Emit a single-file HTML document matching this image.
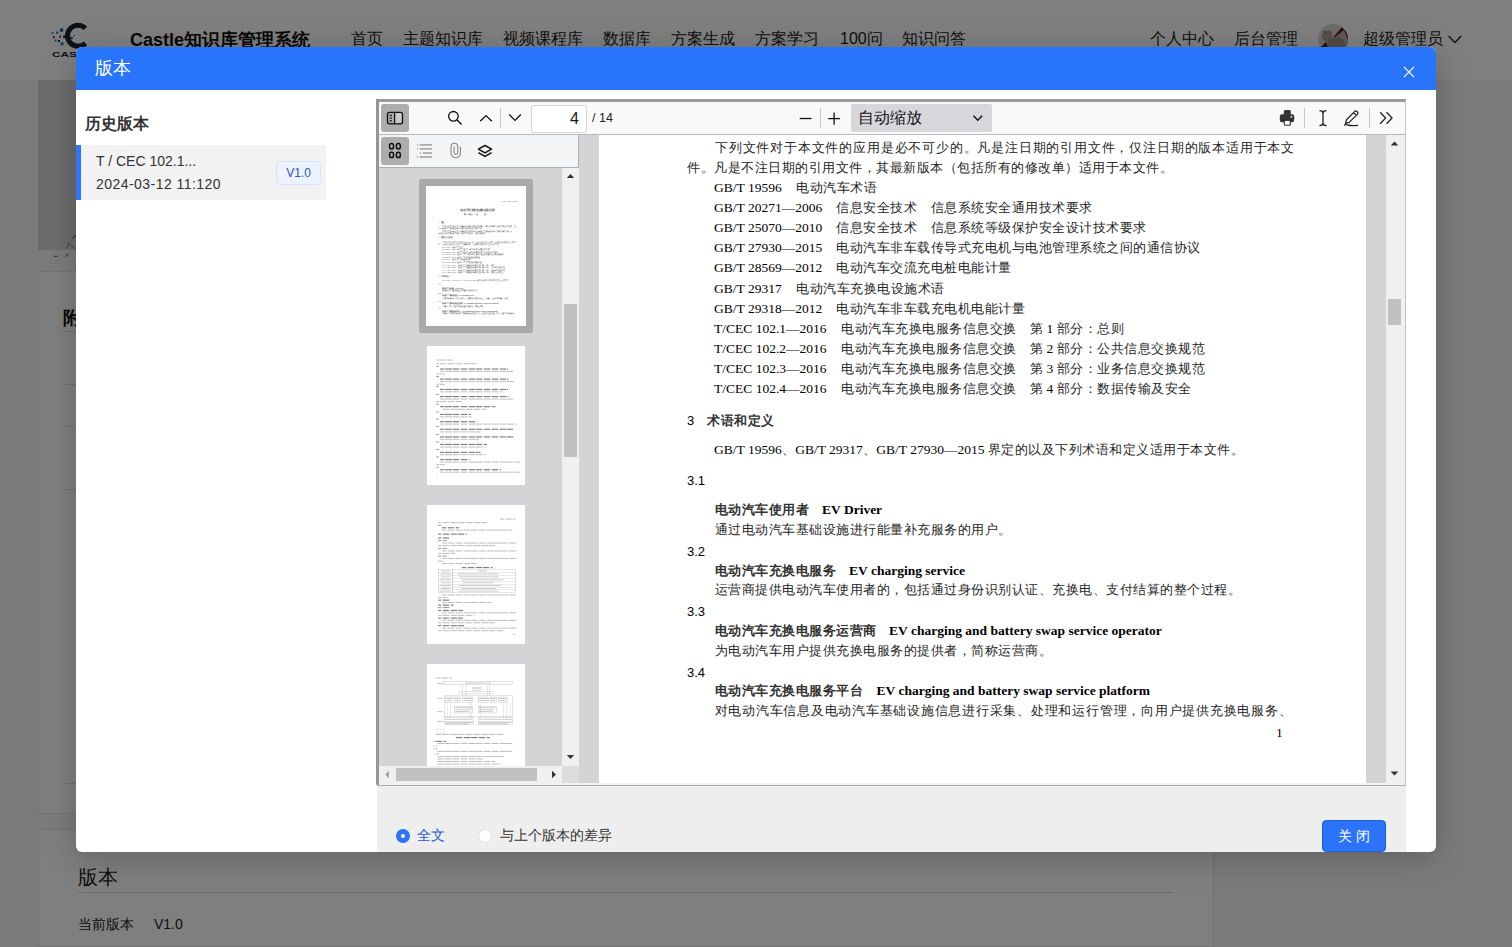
<!DOCTYPE html>
<html><head><meta charset="utf-8">
<style>
*{box-sizing:border-box;margin:0;padding:0}
html,body{width:1512px;height:947px;overflow:hidden;background:#f7f7f7;font-family:"Liberation Sans",sans-serif;color:#333;position:relative}
.a{position:absolute;white-space:nowrap}
#hdr{position:absolute;left:0;top:0;width:1512px;height:80px;background:#fff}
.nav{position:absolute;top:28px;font-size:16px;color:#222;white-space:nowrap;line-height:21px}
#overlay{position:absolute;left:0;top:0;width:1512px;height:947px;background:rgba(0,0,0,.5)}
#modal{position:absolute;left:76px;top:47px;width:1360px;height:805px;background:#fff;border-radius:6px;overflow:hidden;box-shadow:0 6px 32px rgba(0,0,0,.22)}
#mh{position:absolute;left:0;top:0;width:1360px;height:43px;background:#2874fa}
.serif{font-family:"Liberation Serif",serif}
.d{position:absolute;white-space:nowrap;line-height:20px;color:#000}
.d.r{font-family:"Liberation Serif",serif;font-size:13.5px}
.d.b{font-family:"Liberation Serif",serif;font-size:13.5px;font-weight:bold}
.d.h{font-family:"Liberation Sans",sans-serif;font-size:13px}
.d .c{font-size:13px;letter-spacing:0.5px}
.d.r .c{color:#262626}
.d.h .c{font-weight:bold;color:#333}
</style></head><body>
<!-- background page -->
<div id="hdr"></div>
<div class="a" style="left:130px;top:28px;font-size:18px;font-weight:bold;color:#111;line-height:24px">Castle知识库管理系统</div>
<div class="nav" style="left:351px">首页</div>
<div class="nav" style="left:403px">主题知识库</div>
<div class="nav" style="left:503px">视频课程库</div>
<div class="nav" style="left:603px">数据库</div>
<div class="nav" style="left:671px">方案生成</div>
<div class="nav" style="left:755px">方案学习</div>
<div class="nav" style="left:840px">100问</div>
<div class="nav" style="left:902px">知识问答</div>
<div class="nav" style="left:1150px">个人中心</div>
<div class="nav" style="left:1234px">后台管理</div>
<svg class="a" style="left:1318px;top:24px" width="30" height="30" viewBox="0 0 30 30">
 <defs><clipPath id="cav"><circle cx="15" cy="15" r="15"/></clipPath></defs>
 <g clip-path="url(#cav)">
  <rect width="30" height="30" fill="#ddd6cc"/>
  <polygon points="13,16 24,3 34,14 30,30 20,30" fill="#6b1c1c"/>
  <polygon points="16,14 26,6 30,16 30,30 14,30" fill="#bdb3a7"/>
  <polygon points="0,26 8,18 14,30 0,30" fill="#5c1a1a"/>
  <ellipse cx="9" cy="12" rx="5" ry="5.5" fill="#a89f94"/>
  <ellipse cx="18" cy="21" rx="9" ry="8" fill="#a0978b"/>
  <path d="M5 6 L7 10 L10 8z M11 6 L12 10 L14 8z" fill="#8c8377"/>
 </g>
</svg>
<svg class="a" style="left:1446px;top:32px" width="18" height="14" viewBox="0 0 18 14"><polyline points="2.6,4 8.9,10.6 15.3,4" fill="none" stroke="#222" stroke-width="1.4"/></svg>
<svg class="a" style="left:50px;top:20px" width="42" height="32" viewBox="0 0 42 32">
 <path d="M37.2 6.5 A13 13 0 1 0 37.2 24.9 L33.7 21.4 A8 8 0 1 1 33.7 10 Z" fill="#1c2433"/>
 <rect x="10" y="8.5" width="3.2" height="3.2" fill="#1f4f86"/>
 <rect x="6" y="11.5" width="2.3" height="2.3" fill="#3a7aa8"/>
 <rect x="1.6" y="12" width="2" height="2" fill="#4b8ab0"/>
 <rect x="2.8" y="16.3" width="1.8" height="1.8" fill="#1c2433"/>
 <rect x="9" y="15.6" width="2" height="2" fill="#3a5a70"/>
 <rect x="13.2" y="15.4" width="2.8" height="2.8" fill="#1c2433"/>
 <rect x="4.5" y="19.5" width="2" height="2" fill="#3a7aa8"/>
 <rect x="8" y="20" width="2" height="2" fill="#1c2433"/>
 <rect x="10.5" y="22.3" width="3" height="3" fill="#3a7aa8"/>
 <rect x="20.5" y="17" width="2.2" height="2.2" fill="#1f3a66"/>
 <rect x="23.5" y="15" width="1.4" height="1.4" fill="#3a7aa8"/>
</svg>
<svg class="a" style="left:0;top:0" width="120" height="70"><text x="52" y="57" font-family="Liberation Sans" font-size="7.4" font-weight="bold" textLength="47" lengthAdjust="spacingAndGlyphs" fill="#1c2433">CASTLE</text></svg>
<div class="nav" style="left:1363px">超级管理员</div>

<!-- cards -->
<div class="a" style="left:38px;top:80px;width:1175px;height:169px;background:#fff"></div>
<div class="a" style="left:38px;top:80px;width:300px;height:170px;background:#d9d9d9"></div>
<svg class="a" style="left:40px;top:220px" width="40" height="50" viewBox="0 0 40 50"><path d="M26.8 28.5 L28.4 23 L35.5 29.5" stroke="#8a8a8a" stroke-width="1" fill="none"/><path d="M32.6 18.6 L35.4 15.4" stroke="#777" stroke-width="1.5" fill="none"/><path d="M14 36.3 h3.6 M25.6 36.6 L28.6 33.6" stroke="#777" stroke-width="1.2" fill="none"/></svg>
<div class="a" style="left:38px;top:271px;width:1176px;height:543px;background:#fff;border:1px solid #e8e8e8"></div>
<div class="a" style="left:63px;top:306px;font-size:18px;font-weight:bold;color:#111">附件</div>
<div class="a" style="left:63px;top:331px;width:1110px;height:1px;background:#e5e5e5"></div>
<div class="a" style="left:63px;top:384px;width:1110px;height:1px;background:#e5e5e5"></div>
<div class="a" style="left:63px;top:426px;width:1110px;height:1px;background:#e5e5e5"></div>
<div class="a" style="left:63px;top:489px;width:1110px;height:1px;background:#e5e5e5"></div>
<div class="a" style="left:63px;top:783px;width:1110px;height:1px;background:#e5e5e5"></div>
<div class="a" style="left:38px;top:829px;width:1176px;height:118px;background:#fff;border:1px solid #e8e8e8"></div>
<div class="a" style="left:78px;top:864px;font-size:20px;color:#222">版本</div>
<div class="a" style="left:78px;top:892px;width:1096px;height:1px;background:#ddd"></div>
<div class="a" style="left:78px;top:916px;font-size:14px;color:#222">当前版本</div>
<div class="a" style="left:154px;top:916px;font-size:14px;color:#222">V1.0</div>

<div id="overlay"></div>

<div id="modal">
  <div id="mh">
    <div class="a" style="left:19px;top:9px;font-size:18px;color:#fff;line-height:24px">版本</div>
    <svg class="a" style="left:1323px;top:15px" width="20" height="20" viewBox="0 0 20 20"><path d="M4.9 4.9 L15.1 15.1 M15.1 4.9 L4.9 15.1" stroke="#fff" stroke-width="1.2" fill="none"/></svg>
  </div>
  <div class="a" style="left:9px;top:66px;font-size:16px;font-weight:bold;color:#333;line-height:22px">历史版本</div>
  <div class="a" style="left:0;top:98px;width:250px;height:55px;background:#f2f2f2;border-left:5px solid #2b76f9"></div>
  <div class="a" style="left:20px;top:104px;font-size:14px;color:#333;line-height:20px">T / CEC 102.1...</div>
  <div class="a" style="left:20px;top:127px;font-size:14px;color:#333;line-height:20px;letter-spacing:0.45px">2024-03-12 11:120</div>
  <div class="a" style="left:200px;top:114px;width:45px;height:24px;background:#ecf3ff;border:1px solid #d6e5fd;border-radius:4px;font-size:12px;color:#2158c4;text-align:center;line-height:22px">V1.0</div>

</div>
<!-- viewer (page coords) -->
<div class="a" style="left:376px;top:99px;width:1030px;height:687px;background:#d4d4d7;border-top:3px solid #9a9a9a;border-left:3px solid #959595;border-right:1px solid #c4c4c4;border-bottom:1px solid #a8a8a8;border-bottom-left-radius:3px"></div>
<!-- toolbar -->
<div class="a" style="left:379px;top:102px;width:1026px;height:33px;background:#f9f9fa;border-bottom:1px solid #b8b8b8"></div>
<div class="a" style="left:381px;top:104px;width:28px;height:28px;background:#adadad;border-radius:3px"></div>
<svg class="a" style="left:381px;top:104px" width="28" height="28" viewBox="0 0 28 28">
 <rect x="13.6" y="8.5" width="7.6" height="11" fill="#c9c9c9"/>
 <rect x="6.5" y="8.3" width="15" height="11.5" rx="2" fill="none" stroke="#111" stroke-width="1.3"/>
 <line x1="13.6" y1="8.3" x2="13.6" y2="19.8" stroke="#111" stroke-width="1.3"/>
 <line x1="8.6" y1="11.3" x2="11" y2="11.3" stroke="#111" stroke-width="1.1"/>
 <line x1="8.6" y1="14" x2="11" y2="14" stroke="#111" stroke-width="1.1"/>
 <line x1="8.6" y1="16.8" x2="11" y2="16.8" stroke="#111" stroke-width="1.1"/>
</svg>
<svg class="a" style="left:445px;top:108px" width="20" height="20" viewBox="0 0 20 20">
 <circle cx="8.4" cy="8.3" r="4.8" fill="none" stroke="#111" stroke-width="1.3"/>
 <line x1="11.8" y1="11.8" x2="16.6" y2="16.5" stroke="#111" stroke-width="1.4"/>
</svg>
<svg class="a" style="left:476px;top:108px" width="50" height="22" viewBox="0 0 50 22">
 <polyline points="4.2,13.2 10,7.6 15.8,13.2" fill="none" stroke="#111" stroke-width="1.3"/>
 <polyline points="33.2,6.5 39,12.4 44.8,6.5" fill="none" stroke="#111" stroke-width="1.3"/>
</svg>
<div class="a" style="left:500px;top:108px;width:1px;height:20px;background:#c8c8c8"></div>
<div class="a" style="left:531px;top:105px;width:56px;height:28px;background:#fff;border:1px solid #d4d4d4;border-radius:3px"></div>
<div class="a" style="left:531px;top:109px;width:48px;text-align:right;font-size:16px;line-height:20px;color:#151515">4</div>
<div class="a" style="left:592px;top:108px;font-size:12.5px;line-height:20px;color:#222">/ 14</div>
<svg class="a" style="left:795px;top:108px" width="50" height="22" viewBox="0 0 50 22">
 <line x1="4.7" y1="10.5" x2="16.5" y2="10.5" stroke="#111" stroke-width="1.3"/>
 <line x1="33.2" y1="10.6" x2="45" y2="10.6" stroke="#111" stroke-width="1.3"/>
 <line x1="39.1" y1="4.5" x2="39.1" y2="16.7" stroke="#111" stroke-width="1.3"/>
</svg>
<div class="a" style="left:820px;top:108px;width:1px;height:20px;background:#c8c8c8"></div>
<div class="a" style="left:851px;top:104px;width:141px;height:28px;background:#d7d7db;border-radius:2px"></div>
<div class="a" style="left:858px;top:107px;font-size:16px;line-height:22px;color:#111">自动缩放</div>
<svg class="a" style="left:970px;top:112px" width="16" height="12" viewBox="0 0 16 12">
 <polyline points="3.5,3.8 7.8,8.2 12.1,3.8" fill="none" stroke="#111" stroke-width="1.4"/>
</svg>
<svg class="a" style="left:1276px;top:106px" width="22" height="24" viewBox="0 0 22 24">
 <path d="M9.3 3.9 h4 a1.5 1.5 0 0 1 1.5 1.5 v3.4 h-7 v-3.4 a1.5 1.5 0 0 1 1.5 -1.5z" fill="#333"/>
 <rect x="3.8" y="8.3" width="14.4" height="8" rx="2.2" fill="#333"/>
 <rect x="7.8" y="13.6" width="7" height="6.2" rx="1.4" fill="#333"/>
 <rect x="8.9" y="14.8" width="4.8" height="3.9" fill="#f9f9fa"/>
 <rect x="7.8" y="13.6" width="7" height="1.2" fill="#333"/>
 <circle cx="15.3" cy="10.8" r="0.9" fill="#f9f9fa"/>
</svg>
<div class="a" style="left:1304px;top:108px;width:1px;height:20px;background:#c8c8c8"></div>
<svg class="a" style="left:1313px;top:106px" width="20" height="24" viewBox="0 0 20 24">
 <path d="M6.5 4.7 q3.5 0 3.5 2.2 q0 -2.2 3.5 -2.2 M10 6.9 v10.4 M6.5 19.5 q3.5 0 3.5 -2.2 q0 2.2 3.5 2.2" fill="none" stroke="#222" stroke-width="1.3"/>
</svg>
<svg class="a" style="left:1339px;top:106px" width="24" height="24" viewBox="0 0 24 24">
 <path d="M6.5 17.3 l1 -3.6 l8.3 -8.3 a1.5 1.5 0 0 1 2.1 0 l0.6 0.6 a1.5 1.5 0 0 1 0 2.1 l-8.3 8.3z M14.6 6.6 l2.8 2.8" fill="none" stroke="#222" stroke-width="1.3" stroke-linejoin="round"/>
 <path d="M5 19.3 q2 -1.2 4 -0.3 q3 0.8 10 0.4" fill="none" stroke="#222" stroke-width="1.3"/>
</svg>
<div class="a" style="left:1369px;top:108px;width:1px;height:20px;background:#c8c8c8"></div>
<svg class="a" style="left:1376px;top:108px" width="22" height="20" viewBox="0 0 22 20">
 <polyline points="4.2,4.2 9.6,10 4.2,15.8" fill="none" stroke="#222" stroke-width="1.3"/>
 <polyline points="10.6,4.2 16,10 10.6,15.8" fill="none" stroke="#222" stroke-width="1.3"/>
</svg>

<!-- sidebar toolbar -->
<div class="a" style="left:379px;top:135px;width:200px;height:33px;background:#f3f4f5;border-bottom:1px solid #b0b0b0;border-right:1px solid #b0b0b0"></div>
<div class="a" style="left:381px;top:137px;width:28px;height:28px;background:#adadad;border-radius:3px"></div>
<svg class="a" style="left:381px;top:137px" width="28" height="28" viewBox="0 0 28 28">
 <rect x="8.6" y="6.5" width="3.9" height="5.4" rx="1.9" fill="none" stroke="#111" stroke-width="1.5"/>
 <rect x="15.4" y="6.5" width="3.9" height="5.4" rx="1.9" fill="none" stroke="#111" stroke-width="1.5"/>
 <rect x="8.6" y="15.2" width="3.9" height="5.4" rx="1.9" fill="none" stroke="#111" stroke-width="1.5"/>
 <rect x="15.4" y="15.2" width="3.9" height="5.4" rx="1.9" fill="none" stroke="#111" stroke-width="1.5"/>
</svg>
<svg class="a" style="left:414px;top:140px" width="22" height="22" viewBox="0 0 22 22">
 <g stroke="#999" stroke-width="1.4">
 <line x1="3" y1="4.9" x2="4" y2="4.9"/><line x1="5.7" y1="4.9" x2="18" y2="4.9"/>
 <line x1="3" y1="8.9" x2="4" y2="8.9"/><line x1="5.7" y1="8.9" x2="18" y2="8.9"/>
 <line x1="6" y1="13" x2="7" y2="13"/><line x1="8.8" y1="13" x2="18" y2="13"/>
 <line x1="3" y1="17" x2="4" y2="17"/><line x1="5.7" y1="17" x2="18" y2="17"/>
 </g>
</svg>
<svg class="a" style="left:446px;top:140px" width="20" height="22" viewBox="0 0 20 22">
 <path d="M14.5 6.7 V13 A4.75 4.75 0 0 1 5 13 V6.6 A3.4 3.4 0 0 1 11.8 6.6 V12.5 A1.9 1.9 0 0 1 8 12.5 V6.5" fill="none" stroke="#8c8c8c" stroke-width="1.15"/>
</svg>
<svg class="a" style="left:475px;top:140px" width="20" height="20" viewBox="0 0 20 20">
 <path d="M10 5.5 l6.6 3.7 l-6.6 3.7 l-6.6 -3.7z" fill="none" stroke="#111" stroke-width="1.45" stroke-linejoin="round"/>
 <path d="M3.4 12.7 l6.6 3.8 l6.6 -3.8" fill="none" stroke="#111" stroke-width="1.45" stroke-linejoin="miter"/>
</svg>
<!-- sidebar scrollbars -->
<div class="a" style="left:562px;top:168px;width:17px;height:598px;background:#f0f0f0"></div>
<div class="a" style="left:564px;top:304px;width:13px;height:153px;background:#c1c1c1"></div>
<svg class="a" style="left:562px;top:168px" width="17" height="17" viewBox="0 0 17 17"><path d="M4.8 10 L8.5 6 L12.2 10z" fill="#333"/></svg>
<svg class="a" style="left:562px;top:748px" width="17" height="17" viewBox="0 0 17 17"><path d="M4.8 7 L8.5 11 L12.2 7z" fill="#333"/></svg>
<div class="a" style="left:379px;top:766px;width:183px;height:19px;background:#f0f0f0;border-bottom-left-radius:2px"></div>
<div class="a" style="left:396px;top:768px;width:141px;height:13px;background:#c1c1c1"></div>
<svg class="a" style="left:379px;top:766px" width="17" height="17" viewBox="0 0 17 17"><path d="M10 4.8 L6 8.5 L10 12.2z" fill="#a3a3a3"/></svg>
<svg class="a" style="left:545px;top:766px" width="17" height="17" viewBox="0 0 17 17"><path d="M7 4.8 L11 8.5 L7 12.2z" fill="#333"/></svg>
<div class="a" style="left:562px;top:766px;width:17px;height:19px;background:#dcdcdc"></div>

<!-- main view -->
<div class="a" style="left:1386px;top:135px;width:19px;height:648px;background:#f0f0f0"></div>
<div class="a" style="left:1388px;top:299px;width:13px;height:26px;background:#c1c1c1"></div>
<svg class="a" style="left:1385px;top:135px" width="19" height="17" viewBox="0 0 19 17"><path d="M5.7 10.5 L9.5 6.5 L13.3 10.5z" fill="#333"/></svg>
<svg class="a" style="left:1385px;top:765px" width="19" height="17" viewBox="0 0 19 17"><path d="M5.7 6.5 L9.5 10.5 L13.3 6.5z" fill="#333"/></svg>

<!--THUMBS-->
<div class="a" style="left:427px;top:346.0px;width:98px;height:138.5px;overflow:hidden;background:#fff"><div class="a" style="left:0;top:0;width:768px;height:1085px;transform:scale(0.1276);transform-origin:0 0">
<div class="a" style="left:72px;top:106.0px;width:125px;height:8px;background:repeating-linear-gradient(90deg,#bdbdbd 0 7px,#e2e2e2 7px 9px)"></div>
<div class="a" style="left:72px;top:134.5px;width:315px;height:8px;background:repeating-linear-gradient(90deg,#bdbdbd 0 7px,#e2e2e2 7px 9px)"></div>
<div class="a" style="left:72px;top:155.0px;width:21px;height:8px;background:repeating-linear-gradient(90deg,#9a9a9a 0 7px,#e2e2e2 7px 9px)"></div>
<div class="a" style="left:102px;top:175.5px;width:533px;height:9px;background:repeating-linear-gradient(90deg,#7d7d7d 0 7px,#e2e2e2 7px 9px)"></div>
<div class="a" style="left:102px;top:194.6px;width:580px;height:8px;background:repeating-linear-gradient(90deg,#bdbdbd 0 7px,#e2e2e2 7px 9px)"></div>
<div class="a" style="left:72px;top:215.0px;width:68px;height:8px;background:repeating-linear-gradient(90deg,#bdbdbd 0 7px,#e2e2e2 7px 9px)"></div>
<div class="a" style="left:72px;top:234.6px;width:21px;height:8px;background:repeating-linear-gradient(90deg,#9a9a9a 0 7px,#e2e2e2 7px 9px)"></div>
<div class="a" style="left:102px;top:255.0px;width:538px;height:9px;background:repeating-linear-gradient(90deg,#7d7d7d 0 7px,#e2e2e2 7px 9px)"></div>
<div class="a" style="left:102px;top:274.5px;width:580px;height:8px;background:repeating-linear-gradient(90deg,#bdbdbd 0 7px,#e2e2e2 7px 9px)"></div>
<div class="a" style="left:72px;top:295.5px;width:68px;height:8px;background:repeating-linear-gradient(90deg,#bdbdbd 0 7px,#e2e2e2 7px 9px)"></div>
<div class="a" style="left:72px;top:312.7px;width:21px;height:8px;background:repeating-linear-gradient(90deg,#9a9a9a 0 7px,#e2e2e2 7px 9px)"></div>
<div class="a" style="left:102px;top:335.5px;width:533px;height:9px;background:repeating-linear-gradient(90deg,#7d7d7d 0 7px,#e2e2e2 7px 9px)"></div>
<div class="a" style="left:102px;top:355.0px;width:492px;height:8px;background:repeating-linear-gradient(90deg,#bdbdbd 0 7px,#e2e2e2 7px 9px)"></div>
<div class="a" style="left:72px;top:374.6px;width:21px;height:8px;background:repeating-linear-gradient(90deg,#9a9a9a 0 7px,#e2e2e2 7px 9px)"></div>
<div class="a" style="left:102px;top:392.0px;width:533px;height:9px;background:repeating-linear-gradient(90deg,#7d7d7d 0 7px,#e2e2e2 7px 9px)"></div>
<div class="a" style="left:102px;top:412.0px;width:580px;height:8px;background:repeating-linear-gradient(90deg,#bdbdbd 0 7px,#e2e2e2 7px 9px)"></div>
<div class="a" style="left:72px;top:432.0px;width:203px;height:8px;background:repeating-linear-gradient(90deg,#bdbdbd 0 7px,#e2e2e2 7px 9px)"></div>
<div class="a" style="left:72px;top:452.0px;width:21px;height:8px;background:repeating-linear-gradient(90deg,#9a9a9a 0 7px,#e2e2e2 7px 9px)"></div>
<div class="a" style="left:102px;top:471.0px;width:434px;height:9px;background:repeating-linear-gradient(90deg,#7d7d7d 0 7px,#e2e2e2 7px 9px)"></div>
<div class="a" style="left:114px;top:491.8px;width:351px;height:8px;background:repeating-linear-gradient(90deg,#bdbdbd 0 7px,#e2e2e2 7px 9px)"></div>
<div class="a" style="left:72px;top:513.0px;width:21px;height:8px;background:repeating-linear-gradient(90deg,#9a9a9a 0 7px,#e2e2e2 7px 9px)"></div>
<div class="a" style="left:102px;top:531.5px;width:242px;height:9px;background:repeating-linear-gradient(90deg,#7d7d7d 0 7px,#e2e2e2 7px 9px)"></div>
<div class="a" style="left:102px;top:550.6px;width:248px;height:8px;background:repeating-linear-gradient(90deg,#bdbdbd 0 7px,#e2e2e2 7px 9px)"></div>
<div class="a" style="left:72px;top:569.0px;width:21px;height:8px;background:repeating-linear-gradient(90deg,#9a9a9a 0 7px,#e2e2e2 7px 9px)"></div>
<div class="a" style="left:102px;top:588.9px;width:282px;height:9px;background:repeating-linear-gradient(90deg,#7d7d7d 0 7px,#e2e2e2 7px 9px)"></div>
<div class="a" style="left:102px;top:607.8px;width:600px;height:8px;background:repeating-linear-gradient(90deg,#bdbdbd 0 7px,#e2e2e2 7px 9px)"></div>
<div class="a" style="left:72px;top:627.3px;width:21px;height:8px;background:repeating-linear-gradient(90deg,#9a9a9a 0 7px,#e2e2e2 7px 9px)"></div>
<div class="a" style="left:102px;top:648.3px;width:579px;height:9px;background:repeating-linear-gradient(90deg,#7d7d7d 0 7px,#e2e2e2 7px 9px)"></div>
<div class="a" style="left:102px;top:669.0px;width:318px;height:8px;background:repeating-linear-gradient(90deg,#bdbdbd 0 7px,#e2e2e2 7px 9px)"></div>
<div class="a" style="left:72px;top:690.0px;width:21px;height:8px;background:repeating-linear-gradient(90deg,#9a9a9a 0 7px,#e2e2e2 7px 9px)"></div>
<div class="a" style="left:102px;top:708.1px;width:579px;height:9px;background:repeating-linear-gradient(90deg,#7d7d7d 0 7px,#e2e2e2 7px 9px)"></div>
<div class="a" style="left:102px;top:727.0px;width:308px;height:8px;background:repeating-linear-gradient(90deg,#bdbdbd 0 7px,#e2e2e2 7px 9px)"></div>
<div class="a" style="left:72px;top:747.6px;width:21px;height:8px;background:repeating-linear-gradient(90deg,#9a9a9a 0 7px,#e2e2e2 7px 9px)"></div>
<div class="a" style="left:102px;top:767.3px;width:368px;height:9px;background:repeating-linear-gradient(90deg,#7d7d7d 0 7px,#e2e2e2 7px 9px)"></div>
<div class="a" style="left:102px;top:787.5px;width:363px;height:8px;background:repeating-linear-gradient(90deg,#bdbdbd 0 7px,#e2e2e2 7px 9px)"></div>
<div class="a" style="left:72px;top:807.0px;width:21px;height:8px;background:repeating-linear-gradient(90deg,#9a9a9a 0 7px,#e2e2e2 7px 9px)"></div>
<div class="a" style="left:102px;top:828.5px;width:318px;height:9px;background:repeating-linear-gradient(90deg,#7d7d7d 0 7px,#e2e2e2 7px 9px)"></div>
<div class="a" style="left:102px;top:847.8px;width:358px;height:8px;background:repeating-linear-gradient(90deg,#bdbdbd 0 7px,#e2e2e2 7px 9px)"></div>
<div class="a" style="left:72px;top:866.0px;width:21px;height:8px;background:repeating-linear-gradient(90deg,#9a9a9a 0 7px,#e2e2e2 7px 9px)"></div>
<div class="a" style="left:102px;top:885.5px;width:233px;height:9px;background:repeating-linear-gradient(90deg,#7d7d7d 0 7px,#e2e2e2 7px 9px)"></div>
<div class="a" style="left:102px;top:905.5px;width:626px;height:8px;background:repeating-linear-gradient(90deg,#bdbdbd 0 7px,#e2e2e2 7px 9px)"></div>
<div class="a" style="left:72px;top:925.7px;width:68px;height:8px;background:repeating-linear-gradient(90deg,#bdbdbd 0 7px,#e2e2e2 7px 9px)"></div>
<div class="a" style="left:72px;top:946.0px;width:21px;height:8px;background:repeating-linear-gradient(90deg,#9a9a9a 0 7px,#e2e2e2 7px 9px)"></div>
<div class="a" style="left:102px;top:965.1px;width:478px;height:9px;background:repeating-linear-gradient(90deg,#7d7d7d 0 7px,#e2e2e2 7px 9px)"></div>
<div class="a" style="left:102px;top:985.2px;width:626px;height:8px;background:repeating-linear-gradient(90deg,#bdbdbd 0 7px,#e2e2e2 7px 9px)"></div>
<div class="a" style="left:76px;top:1007.0px;width:10px;height:8px;background:repeating-linear-gradient(90deg,#bdbdbd 0 7px,#e2e2e2 7px 9px)"></div>
</div></div>
<div class="a" style="left:427px;top:505.0px;width:98px;height:138.5px;overflow:hidden;background:#fff"><div class="a" style="left:0;top:0;width:768px;height:1085px;transform:scale(0.1276);transform-origin:0 0">
<div class="a" style="left:572px;top:105.5px;width:125px;height:8px;background:repeating-linear-gradient(90deg,#bdbdbd 0 7px,#e2e2e2 7px 9px)"></div>
<div class="a" style="left:87px;top:134.0px;width:387px;height:8px;background:repeating-linear-gradient(90deg,#bdbdbd 0 7px,#e2e2e2 7px 9px)"></div>
<div class="a" style="left:87px;top:155.0px;width:23px;height:8px;background:repeating-linear-gradient(90deg,#9a9a9a 0 7px,#e2e2e2 7px 9px)"></div>
<div class="a" style="left:117px;top:173.5px;width:134px;height:9px;background:repeating-linear-gradient(90deg,#7d7d7d 0 7px,#e2e2e2 7px 9px)"></div>
<div class="a" style="left:117px;top:193.0px;width:551px;height:8px;background:repeating-linear-gradient(90deg,#bdbdbd 0 7px,#e2e2e2 7px 9px)"></div>
<div class="a" style="left:87px;top:224.1px;width:226px;height:9px;background:repeating-linear-gradient(90deg,#7d7d7d 0 7px,#e2e2e2 7px 9px)"></div>
<div class="a" style="left:87px;top:254.0px;width:87px;height:9px;background:repeating-linear-gradient(90deg,#7d7d7d 0 7px,#e2e2e2 7px 9px)"></div>
<div class="a" style="left:87px;top:275.0px;width:69px;height:8px;background:repeating-linear-gradient(90deg,#9a9a9a 0 7px,#e2e2e2 7px 9px)"></div>
<div class="a" style="left:117px;top:294.0px;width:580px;height:8px;background:repeating-linear-gradient(90deg,#bdbdbd 0 7px,#e2e2e2 7px 9px)"></div>
<div class="a" style="left:87px;top:313.6px;width:449px;height:8px;background:repeating-linear-gradient(90deg,#bdbdbd 0 7px,#e2e2e2 7px 9px)"></div>
<div class="a" style="left:87px;top:336.0px;width:69px;height:8px;background:repeating-linear-gradient(90deg,#9a9a9a 0 7px,#e2e2e2 7px 9px)"></div>
<div class="a" style="left:117px;top:355.7px;width:580px;height:8px;background:repeating-linear-gradient(90deg,#bdbdbd 0 7px,#e2e2e2 7px 9px)"></div>
<div class="a" style="left:87px;top:374.8px;width:133px;height:8px;background:repeating-linear-gradient(90deg,#bdbdbd 0 7px,#e2e2e2 7px 9px)"></div>
<div class="a" style="left:87px;top:395.6px;width:69px;height:8px;background:repeating-linear-gradient(90deg,#9a9a9a 0 7px,#e2e2e2 7px 9px)"></div>
<div class="a" style="left:117px;top:415.0px;width:580px;height:8px;background:repeating-linear-gradient(90deg,#bdbdbd 0 7px,#e2e2e2 7px 9px)"></div>
<div class="a" style="left:87px;top:436.0px;width:45px;height:8px;background:repeating-linear-gradient(90deg,#bdbdbd 0 7px,#e2e2e2 7px 9px)"></div>
<div class="a" style="left:117px;top:455.0px;width:271px;height:8px;background:repeating-linear-gradient(90deg,#bdbdbd 0 7px,#e2e2e2 7px 9px)"></div>
<div class="a" style="left:274px;top:486.4px;width:241px;height:9px;background:repeating-linear-gradient(90deg,#7d7d7d 0 7px,#e2e2e2 7px 9px)"></div>
<div class="a" style="left:117px;top:700.5px;width:580px;height:8px;background:repeating-linear-gradient(90deg,#bdbdbd 0 7px,#e2e2e2 7px 9px)"></div>
<div class="a" style="left:87px;top:720.0px;width:73px;height:8px;background:repeating-linear-gradient(90deg,#bdbdbd 0 7px,#e2e2e2 7px 9px)"></div>
<div class="a" style="left:87px;top:740.9px;width:98px;height:9px;background:repeating-linear-gradient(90deg,#7d7d7d 0 7px,#e2e2e2 7px 9px)"></div>
<div class="a" style="left:117px;top:759.8px;width:388px;height:8px;background:repeating-linear-gradient(90deg,#bdbdbd 0 7px,#e2e2e2 7px 9px)"></div>
<div class="a" style="left:87px;top:779.5px;width:121px;height:9px;background:repeating-linear-gradient(90deg,#7d7d7d 0 7px,#e2e2e2 7px 9px)"></div>
<div class="a" style="left:87px;top:800.0px;width:95px;height:8px;background:repeating-linear-gradient(90deg,#9a9a9a 0 7px,#e2e2e2 7px 9px)"></div>
<div class="a" style="left:87px;top:821.5px;width:196px;height:9px;background:repeating-linear-gradient(90deg,#7d7d7d 0 7px,#e2e2e2 7px 9px)"></div>
<div class="a" style="left:117px;top:840.5px;width:580px;height:8px;background:repeating-linear-gradient(90deg,#bdbdbd 0 7px,#e2e2e2 7px 9px)"></div>
<div class="a" style="left:87px;top:861.3px;width:286px;height:8px;background:repeating-linear-gradient(90deg,#bdbdbd 0 7px,#e2e2e2 7px 9px)"></div>
<div class="a" style="left:87px;top:882.3px;width:196px;height:9px;background:repeating-linear-gradient(90deg,#7d7d7d 0 7px,#e2e2e2 7px 9px)"></div>
<div class="a" style="left:117px;top:899.9px;width:580px;height:8px;background:repeating-linear-gradient(90deg,#bdbdbd 0 7px,#e2e2e2 7px 9px)"></div>
<div class="a" style="left:87px;top:919.4px;width:449px;height:8px;background:repeating-linear-gradient(90deg,#bdbdbd 0 7px,#e2e2e2 7px 9px)"></div>
<div class="a" style="left:87px;top:941.1px;width:205px;height:9px;background:repeating-linear-gradient(90deg,#7d7d7d 0 7px,#e2e2e2 7px 9px)"></div>
<div class="a" style="left:117px;top:961.2px;width:580px;height:8px;background:repeating-linear-gradient(90deg,#bdbdbd 0 7px,#e2e2e2 7px 9px)"></div>
<div class="a" style="left:87px;top:981.4px;width:520px;height:8px;background:repeating-linear-gradient(90deg,#bdbdbd 0 7px,#e2e2e2 7px 9px)"></div>
<div class="a" style="left:674px;top:1009.0px;width:16px;height:8px;background:repeating-linear-gradient(90deg,#bdbdbd 0 7px,#e2e2e2 7px 9px)"></div><div class="a" style="left:87px;top:504px;width:610px;height:181px;border:2px solid #999"></div>
<div class="a" style="left:200px;top:504px;width:3px;height:181px;background:#888"></div>
<div class="a" style="left:87px;top:531px;width:610px;height:2px;background:#aaa"></div>
<div class="a" style="left:87px;top:553px;width:610px;height:2px;background:#aaa"></div>
<div class="a" style="left:87px;top:576px;width:610px;height:2px;background:#aaa"></div>
<div class="a" style="left:87px;top:599px;width:610px;height:2px;background:#aaa"></div>
<div class="a" style="left:87px;top:621px;width:610px;height:2px;background:#aaa"></div>
<div class="a" style="left:87px;top:643px;width:610px;height:2px;background:#aaa"></div>
<div class="a" style="left:87px;top:664px;width:610px;height:2px;background:#aaa"></div>
<div class="a" style="left:110px;top:514px;width:70px;height:7px;background:#c4c4c4"></div>
<div class="a" style="left:400px;top:514px;width:70px;height:7px;background:#c4c4c4"></div>
<div class="a" style="left:100px;top:537px;width:90px;height:7px;background:#c4c4c4"></div>
<div class="a" style="left:240px;top:537px;width:320px;height:7px;background:#c4c4c4"></div>
<div class="a" style="left:110px;top:560px;width:70px;height:7px;background:#c4c4c4"></div>
<div class="a" style="left:250px;top:560px;width:310px;height:7px;background:#c4c4c4"></div>
<div class="a" style="left:100px;top:583px;width:90px;height:7px;background:#c4c4c4"></div>
<div class="a" style="left:270px;top:583px;width:330px;height:7px;background:#c4c4c4"></div>
<div class="a" style="left:110px;top:606px;width:70px;height:7px;background:#c4c4c4"></div>
<div class="a" style="left:280px;top:606px;width:240px;height:7px;background:#c4c4c4"></div>
<div class="a" style="left:100px;top:628px;width:90px;height:7px;background:#c4c4c4"></div>
<div class="a" style="left:250px;top:628px;width:330px;height:7px;background:#c4c4c4"></div>
<div class="a" style="left:110px;top:650px;width:70px;height:7px;background:#c4c4c4"></div>
<div class="a" style="left:270px;top:650px;width:270px;height:7px;background:#c4c4c4"></div>
<div class="a" style="left:100px;top:671px;width:90px;height:7px;background:#c4c4c4"></div>
<div class="a" style="left:250px;top:671px;width:310px;height:7px;background:#c4c4c4"></div>
</div></div>
<div class="a" style="left:427px;top:664.0px;width:98px;height:102.0px;overflow:hidden;background:#fff"><div class="a" style="left:0;top:0;width:768px;height:1085px;transform:scale(0.1276);transform-origin:0 0">
<div class="a" style="left:70px;top:105.7px;width:126px;height:8px;background:repeating-linear-gradient(90deg,#bdbdbd 0 7px,#e2e2e2 7px 9px)"></div>
<div class="a" style="left:69px;top:547.5px;width:535px;height:8px;background:repeating-linear-gradient(90deg,#bdbdbd 0 7px,#e2e2e2 7px 9px)"></div>
<div class="a" style="left:225px;top:571.5px;width:268px;height:9px;background:repeating-linear-gradient(90deg,#7d7d7d 0 7px,#e2e2e2 7px 9px)"></div>
<div class="a" style="left:50px;top:601.5px;width:100px;height:9px;background:repeating-linear-gradient(90deg,#7d7d7d 0 7px,#e2e2e2 7px 9px)"></div>
<div class="a" style="left:75px;top:619.0px;width:593px;height:8px;background:repeating-linear-gradient(90deg,#bdbdbd 0 7px,#e2e2e2 7px 9px)"></div>
<div class="a" style="left:50px;top:639.0px;width:30px;height:8px;background:repeating-linear-gradient(90deg,#bdbdbd 0 7px,#e2e2e2 7px 9px)"></div>
<div class="a" style="left:50px;top:661.0px;width:30px;height:8px;background:repeating-linear-gradient(90deg,#9a9a9a 0 7px,#e2e2e2 7px 9px)"></div>
<div class="a" style="left:75px;top:681.0px;width:593px;height:8px;background:repeating-linear-gradient(90deg,#bdbdbd 0 7px,#e2e2e2 7px 9px)"></div>
<div class="a" style="left:50px;top:701.0px;width:45px;height:8px;background:repeating-linear-gradient(90deg,#bdbdbd 0 7px,#e2e2e2 7px 9px)"></div>
<div class="a" style="left:75px;top:720.6px;width:529px;height:8px;background:repeating-linear-gradient(90deg,#bdbdbd 0 7px,#e2e2e2 7px 9px)"></div>
<div class="a" style="left:75px;top:740.0px;width:365px;height:8px;background:repeating-linear-gradient(90deg,#bdbdbd 0 7px,#e2e2e2 7px 9px)"></div>
<div class="a" style="left:75px;top:760.0px;width:459px;height:8px;background:repeating-linear-gradient(90deg,#bdbdbd 0 7px,#e2e2e2 7px 9px)"></div>
<div class="a" style="left:75px;top:779.7px;width:507px;height:8px;background:repeating-linear-gradient(90deg,#bdbdbd 0 7px,#e2e2e2 7px 9px)"></div><div class="a" style="left:130px;top:136px;width:542px;height:26px;border:2px solid #8a8a8a"></div>
<div class="a" style="left:355px;top:181px;width:73px;height:27px;border:2px solid #8a8a8a"></div>
<div class="a" style="left:280px;top:162px;width:2px;height:87px;background:#999"></div>
<div class="a" style="left:305px;top:162px;width:2px;height:87px;background:#999"></div>
<div class="a" style="left:470px;top:162px;width:2px;height:87px;background:#999"></div>
<div class="a" style="left:490px;top:162px;width:2px;height:87px;background:#999"></div>
<div class="a" style="left:137px;top:249px;width:535px;height:161px;border:2px solid #8a8a8a"></div>
<div class="a" style="left:145px;top:258px;width:60px;height:42px;border:2px solid #8a8a8a"></div>
<div class="a" style="left:215px;top:258px;width:50px;height:42px;border:2px solid #8a8a8a"></div>
<div class="a" style="left:280px;top:258px;width:80px;height:42px;border:2px solid #8a8a8a"></div>
<div class="a" style="left:400px;top:258px;width:85px;height:42px;border:2px solid #8a8a8a"></div>
<div class="a" style="left:495px;top:258px;width:50px;height:42px;border:2px solid #8a8a8a"></div>
<div class="a" style="left:560px;top:258px;width:70px;height:42px;border:2px solid #8a8a8a"></div>
<div class="a" style="left:215px;top:330px;width:145px;height:55px;border:2px solid #8a8a8a"></div>
<div class="a" style="left:400px;top:330px;width:145px;height:55px;border:2px solid #8a8a8a"></div>
<div class="a" style="left:137px;top:421px;width:228px;height:54px;border:2px solid #8a8a8a"></div>
<div class="a" style="left:137px;top:447px;width:228px;height:2px;background:#999"></div>
<div class="a" style="left:400px;top:421px;width:272px;height:54px;border:2px solid #8a8a8a"></div>
<div class="a" style="left:400px;top:447px;width:272px;height:2px;background:#999"></div>
<div class="a" style="left:77px;top:150px;width:50px;height:7px;background:#c4c4c4"></div>
<div class="a" style="left:77px;top:265px;width:50px;height:7px;background:#c4c4c4"></div>
<div class="a" style="left:77px;top:370px;width:50px;height:7px;background:#c4c4c4"></div>
<div class="a" style="left:77px;top:446px;width:50px;height:7px;background:#c4c4c4"></div>
<div class="a" style="left:300px;top:146px;width:200px;height:6px;background:#bdbdbd"></div>
<div class="a" style="left:365px;top:191px;width:53px;height:6px;background:#bdbdbd"></div>
<div class="a" style="left:151px;top:268px;width:48px;height:6px;background:#bdbdbd"></div>
<div class="a" style="left:151px;top:284px;width:44px;height:6px;background:#bdbdbd"></div>
<div class="a" style="left:221px;top:268px;width:38px;height:6px;background:#bdbdbd"></div>
<div class="a" style="left:221px;top:284px;width:34px;height:6px;background:#bdbdbd"></div>
<div class="a" style="left:286px;top:268px;width:68px;height:6px;background:#bdbdbd"></div>
<div class="a" style="left:286px;top:284px;width:64px;height:6px;background:#bdbdbd"></div>
<div class="a" style="left:406px;top:268px;width:73px;height:6px;background:#bdbdbd"></div>
<div class="a" style="left:406px;top:284px;width:69px;height:6px;background:#bdbdbd"></div>
<div class="a" style="left:501px;top:268px;width:38px;height:6px;background:#bdbdbd"></div>
<div class="a" style="left:501px;top:284px;width:34px;height:6px;background:#bdbdbd"></div>
<div class="a" style="left:566px;top:268px;width:58px;height:6px;background:#bdbdbd"></div>
<div class="a" style="left:566px;top:284px;width:54px;height:6px;background:#bdbdbd"></div>
<div class="a" style="left:223px;top:340px;width:129px;height:6px;background:#bdbdbd"></div>
<div class="a" style="left:223px;top:356px;width:117px;height:6px;background:#bdbdbd"></div>
<div class="a" style="left:223px;top:370px;width:107px;height:6px;background:#bdbdbd"></div>
<div class="a" style="left:408px;top:340px;width:129px;height:6px;background:#bdbdbd"></div>
<div class="a" style="left:408px;top:356px;width:117px;height:6px;background:#bdbdbd"></div>
<div class="a" style="left:408px;top:370px;width:107px;height:6px;background:#bdbdbd"></div>
<div class="a" style="left:145px;top:430px;width:212px;height:6px;background:#bdbdbd"></div>
<div class="a" style="left:145px;top:457px;width:212px;height:6px;background:#bdbdbd"></div>
<div class="a" style="left:145px;top:466px;width:180px;height:6px;background:#bdbdbd"></div>
<div class="a" style="left:408px;top:430px;width:256px;height:6px;background:#bdbdbd"></div>
<div class="a" style="left:408px;top:457px;width:256px;height:6px;background:#bdbdbd"></div>
<div class="a" style="left:408px;top:466px;width:224px;height:6px;background:#bdbdbd"></div>
<div class="a" style="left:160px;top:300px;width:2px;height:121px;background:#b0b0b0"></div>
<div class="a" style="left:185px;top:300px;width:2px;height:121px;background:#b0b0b0"></div>
<div class="a" style="left:330px;top:300px;width:2px;height:121px;background:#b0b0b0"></div>
<div class="a" style="left:350px;top:300px;width:2px;height:121px;background:#b0b0b0"></div>
<div class="a" style="left:420px;top:300px;width:2px;height:121px;background:#b0b0b0"></div>
<div class="a" style="left:600px;top:300px;width:2px;height:121px;background:#b0b0b0"></div>
<div class="a" style="left:620px;top:300px;width:2px;height:121px;background:#b0b0b0"></div>
<div class="a" style="left:650px;top:300px;width:2px;height:121px;background:#b0b0b0"></div>
<div class="a" style="left:250px;top:215px;width:270px;height:4px;background:#c4c4c4"></div>
<div class="a" style="left:250px;top:232px;width:270px;height:4px;background:#c4c4c4"></div>
<div class="a" style="left:70px;top:509px;width:65px;height:33px;border:2px solid #aaa"></div>
</div></div>
<!--/THUMBS-->
<!--DOC-->
<div class="a" style="left:419px;top:179px;width:114px;height:154px;background:#a9a9ac;border-radius:3px"></div>
<div class="a" style="left:426px;top:186px;width:100px;height:140px;overflow:hidden;background:#fff"><div class="a" style="left:1px;top:0.5px;width:768px;height:1085px;transform:scale(0.1276);transform-origin:0 0;opacity:0.8">
<div class="d r" style="left:583.0px;top:103.0px;font-size:15px">T/CEC 102.1—2016</div>
<div class="d h" style="left:261.0px;top:168.0px;font-weight:bold"><span class="c" style="font-size:20px;letter-spacing:0.5px">电动汽车充换电服务信息交换</span></div>
<div class="d h" style="left:290.0px;top:201.0px;font-weight:bold;font-size:18px"><span class="c" style="font-size:18px;letter-spacing:1px">第</span> 1 <span class="c" style="font-size:18px;letter-spacing:1px">部分：总　　则</span></div>
<div class="d h" style="left:87.0px;top:266.0px;">1<span class="c">　范围</span></div>
<div class="d r" style="left:117.0px;top:297.0px;"><span class="c" style="letter-spacing:0.4px">本部分规定了电动汽车充换电服务信息交换的总体架构、数据交换内容与交换方式的总体要求，适</span></div>
<div class="d r" style="left:89.0px;top:317.0px;"><span class="c">用于电动汽车充换电服务平台之间的信息交换与数据共享。</span></div>
<div class="d r" style="left:117.0px;top:337.0px;"><span class="c" style="letter-spacing:0.4px">本部分适用于电动汽车充换电服务运营商平台与电动汽车充换电服务平台之间的信息交换，其</span></div>
<div class="d r" style="left:89.0px;top:357.0px;"><span class="c">他服务平台之间的信息交换可参照本部分执行，信息交换内容。</span></div>
<div class="d h" style="left:87.0px;top:388.0px;">2<span class="c">　规范性引用文件</span></div>
<div class="d r" style="left:117.0px;top:420.8px;"><span class="c" style="letter-spacing:0.81px">下列文件对于本文件的应用是必不可少的。凡是注日期的引用文件，仅注日期的版本适用于本文</span></div>
<div class="d r" style="left:89.0px;top:440.9px;"><span class="c">件。凡是不注日期的引用文件，其最新版本（包括所有的修改单）适用于本文件。</span></div>
<div class="d r" style="left:116.0px;top:461.0px;">GB/T 19596</div>
<div class="d r" style="left:198.0px;top:461.0px;"><span class="c">电动汽车术语</span></div>
<div class="d r" style="left:116.0px;top:481.1px;">GB/T 20271—2006</div>
<div class="d r" style="left:238.0px;top:481.1px;"><span class="c">信息安全技术</span></div>
<div class="d r" style="left:332.5px;top:481.1px;"><span class="c">信息系统安全通用技术要求</span></div>
<div class="d r" style="left:116.0px;top:501.2px;">GB/T 25070—2010</div>
<div class="d r" style="left:238.0px;top:501.2px;"><span class="c">信息安全技术</span></div>
<div class="d r" style="left:332.5px;top:501.2px;"><span class="c">信息系统等级保护安全设计技术要求</span></div>
<div class="d r" style="left:116.0px;top:521.3px;">GB/T 27930—2015</div>
<div class="d r" style="left:238.0px;top:521.3px;"><span class="c">电动汽车非车载传导式充电机与电池管理系统之间的通信协议</span></div>
<div class="d r" style="left:116.0px;top:541.4px;">GB/T 28569—2012</div>
<div class="d r" style="left:238.0px;top:541.4px;"><span class="c">电动汽车交流充电桩电能计量</span></div>
<div class="d r" style="left:116.0px;top:561.5px;">GB/T 29317</div>
<div class="d r" style="left:198.0px;top:561.5px;"><span class="c">电动汽车充换电设施术语</span></div>
<div class="d r" style="left:116.0px;top:581.6px;">GB/T 29318—2012</div>
<div class="d r" style="left:238.0px;top:581.6px;"><span class="c">电动汽车非车载充电机电能计量</span></div>
<div class="d r" style="left:116.0px;top:601.7px;">T/CEC 102.1—2016</div>
<div class="d r" style="left:243.0px;top:601.7px;"><span class="c">电动汽车充换电服务信息交换</span></div>
<div class="d r" style="left:431.5px;top:601.7px;"><span class="c">第</span> 1 <span class="c">部分：总则</span></div>
<div class="d r" style="left:116.0px;top:621.8px;">T/CEC 102.2—2016</div>
<div class="d r" style="left:243.0px;top:621.8px;"><span class="c">电动汽车充换电服务信息交换</span></div>
<div class="d r" style="left:431.5px;top:621.8px;"><span class="c">第</span> 2 <span class="c">部分：公共信息交换规范</span></div>
<div class="d r" style="left:116.0px;top:641.9px;">T/CEC 102.3—2016</div>
<div class="d r" style="left:243.0px;top:641.9px;"><span class="c">电动汽车充换电服务信息交换</span></div>
<div class="d r" style="left:431.5px;top:641.9px;"><span class="c">第</span> 3 <span class="c">部分：业务信息交换规范</span></div>
<div class="d r" style="left:116.0px;top:662.0px;">T/CEC 102.4—2016</div>
<div class="d r" style="left:243.0px;top:662.0px;"><span class="c">电动汽车充换电服务信息交换</span></div>
<div class="d r" style="left:431.5px;top:662.0px;"><span class="c">第</span> 4 <span class="c">部分：数据传输及安全</span></div>
<div class="d h" style="left:89.0px;top:694.0px;">3</div>
<div class="d h" style="left:109.0px;top:694.0px;"><span class="c">术语和定义</span></div>
<div class="d r" style="left:116.0px;top:723.0px;">GB/T 19596<span class="c">、</span>GB/T 29317<span class="c">、</span>GB/T 27930—2015 <span class="c">界定的以及下列术语和定义适用于本文件。</span></div>
<div class="d h" style="left:89.0px;top:754.0px;">3.1</div>
<div class="d h" style="left:116.5px;top:783.0px;"><span class="c">电动汽车使用者</span></div>
<div class="d b" style="left:224.0px;top:783.0px;">EV Driver</div>
<div class="d r" style="left:116.5px;top:802.6px;"><span class="c">通过电动汽车基础设施进行能量补充服务的用户。</span></div>
<div class="d h" style="left:89.0px;top:825.0px;">3.2</div>
<div class="d h" style="left:116.5px;top:843.5px;"><span class="c">电动汽车充换电服务</span></div>
<div class="d b" style="left:251.0px;top:843.5px;">EV charging service</div>
<div class="d r" style="left:116.5px;top:863.3px;"><span class="c">运营商提供电动汽车使用者的，包括通过身份识别认证、充换电、支付结算的整个过程。</span></div>
<div class="d h" style="left:89.0px;top:885.0px;">3.3</div>
<div class="d h" style="left:116.5px;top:903.8px;"><span class="c">电动汽车充换电服务运营商</span></div>
<div class="d b" style="left:291.0px;top:903.8px;">EV charging and battery swap service operator</div>
<div class="d r" style="left:116.5px;top:924.0px;"><span class="c">为电动汽车用户提供充换电服务的提供者，简称运营商。</span></div>
<div class="d h" style="left:89.0px;top:945.5px;">3.4</div>
<div class="d h" style="left:116.5px;top:963.8px;"><span class="c">电动汽车充换电服务平台</span></div>
<div class="d b" style="left:278.5px;top:963.8px;">EV charging and battery swap service platform</div>
<div class="d r" style="left:116.5px;top:983.8px;"><span class="c" style="letter-spacing:0.76px">对电动汽车信息及电动汽车基础设施信息进行采集、处理和运行管理，向用户提供充换电服务、</span></div>
<div class="d r" style="left:678.0px;top:1006.0px;">1</div>
</div></div>
<div class="a" style="left:599px;top:135px;width:767px;height:648px;overflow:hidden;background:#fff"><div class="a" style="left:-1px;top:-418px;width:768px;height:1085px">
<div class="d r" style="left:583.0px;top:103.0px;font-size:15px">T/CEC 102.1—2016</div>
<div class="d h" style="left:261.0px;top:168.0px;font-weight:bold"><span class="c" style="font-size:20px;letter-spacing:0.5px">电动汽车充换电服务信息交换</span></div>
<div class="d h" style="left:290.0px;top:201.0px;font-weight:bold;font-size:18px"><span class="c" style="font-size:18px;letter-spacing:1px">第</span> 1 <span class="c" style="font-size:18px;letter-spacing:1px">部分：总　　则</span></div>
<div class="d h" style="left:87.0px;top:266.0px;">1<span class="c">　范围</span></div>
<div class="d r" style="left:117.0px;top:297.0px;"><span class="c" style="letter-spacing:0.4px">本部分规定了电动汽车充换电服务信息交换的总体架构、数据交换内容与交换方式的总体要求，适</span></div>
<div class="d r" style="left:89.0px;top:317.0px;"><span class="c">用于电动汽车充换电服务平台之间的信息交换与数据共享。</span></div>
<div class="d r" style="left:117.0px;top:337.0px;"><span class="c" style="letter-spacing:0.4px">本部分适用于电动汽车充换电服务运营商平台与电动汽车充换电服务平台之间的信息交换，其</span></div>
<div class="d r" style="left:89.0px;top:357.0px;"><span class="c">他服务平台之间的信息交换可参照本部分执行，信息交换内容。</span></div>
<div class="d h" style="left:87.0px;top:388.0px;">2<span class="c">　规范性引用文件</span></div>
<div class="d r" style="left:117.0px;top:420.8px;"><span class="c" style="letter-spacing:0.81px">下列文件对于本文件的应用是必不可少的。凡是注日期的引用文件，仅注日期的版本适用于本文</span></div>
<div class="d r" style="left:89.0px;top:440.9px;"><span class="c">件。凡是不注日期的引用文件，其最新版本（包括所有的修改单）适用于本文件。</span></div>
<div class="d r" style="left:116.0px;top:461.0px;">GB/T 19596</div>
<div class="d r" style="left:198.0px;top:461.0px;"><span class="c">电动汽车术语</span></div>
<div class="d r" style="left:116.0px;top:481.1px;">GB/T 20271—2006</div>
<div class="d r" style="left:238.0px;top:481.1px;"><span class="c">信息安全技术</span></div>
<div class="d r" style="left:332.5px;top:481.1px;"><span class="c">信息系统安全通用技术要求</span></div>
<div class="d r" style="left:116.0px;top:501.2px;">GB/T 25070—2010</div>
<div class="d r" style="left:238.0px;top:501.2px;"><span class="c">信息安全技术</span></div>
<div class="d r" style="left:332.5px;top:501.2px;"><span class="c">信息系统等级保护安全设计技术要求</span></div>
<div class="d r" style="left:116.0px;top:521.3px;">GB/T 27930—2015</div>
<div class="d r" style="left:238.0px;top:521.3px;"><span class="c">电动汽车非车载传导式充电机与电池管理系统之间的通信协议</span></div>
<div class="d r" style="left:116.0px;top:541.4px;">GB/T 28569—2012</div>
<div class="d r" style="left:238.0px;top:541.4px;"><span class="c">电动汽车交流充电桩电能计量</span></div>
<div class="d r" style="left:116.0px;top:561.5px;">GB/T 29317</div>
<div class="d r" style="left:198.0px;top:561.5px;"><span class="c">电动汽车充换电设施术语</span></div>
<div class="d r" style="left:116.0px;top:581.6px;">GB/T 29318—2012</div>
<div class="d r" style="left:238.0px;top:581.6px;"><span class="c">电动汽车非车载充电机电能计量</span></div>
<div class="d r" style="left:116.0px;top:601.7px;">T/CEC 102.1—2016</div>
<div class="d r" style="left:243.0px;top:601.7px;"><span class="c">电动汽车充换电服务信息交换</span></div>
<div class="d r" style="left:431.5px;top:601.7px;"><span class="c">第</span> 1 <span class="c">部分：总则</span></div>
<div class="d r" style="left:116.0px;top:621.8px;">T/CEC 102.2—2016</div>
<div class="d r" style="left:243.0px;top:621.8px;"><span class="c">电动汽车充换电服务信息交换</span></div>
<div class="d r" style="left:431.5px;top:621.8px;"><span class="c">第</span> 2 <span class="c">部分：公共信息交换规范</span></div>
<div class="d r" style="left:116.0px;top:641.9px;">T/CEC 102.3—2016</div>
<div class="d r" style="left:243.0px;top:641.9px;"><span class="c">电动汽车充换电服务信息交换</span></div>
<div class="d r" style="left:431.5px;top:641.9px;"><span class="c">第</span> 3 <span class="c">部分：业务信息交换规范</span></div>
<div class="d r" style="left:116.0px;top:662.0px;">T/CEC 102.4—2016</div>
<div class="d r" style="left:243.0px;top:662.0px;"><span class="c">电动汽车充换电服务信息交换</span></div>
<div class="d r" style="left:431.5px;top:662.0px;"><span class="c">第</span> 4 <span class="c">部分：数据传输及安全</span></div>
<div class="d h" style="left:89.0px;top:694.0px;">3</div>
<div class="d h" style="left:109.0px;top:694.0px;"><span class="c">术语和定义</span></div>
<div class="d r" style="left:116.0px;top:723.0px;">GB/T 19596<span class="c">、</span>GB/T 29317<span class="c">、</span>GB/T 27930—2015 <span class="c">界定的以及下列术语和定义适用于本文件。</span></div>
<div class="d h" style="left:89.0px;top:754.0px;">3.1</div>
<div class="d h" style="left:116.5px;top:783.0px;"><span class="c">电动汽车使用者</span></div>
<div class="d b" style="left:224.0px;top:783.0px;">EV Driver</div>
<div class="d r" style="left:116.5px;top:802.6px;"><span class="c">通过电动汽车基础设施进行能量补充服务的用户。</span></div>
<div class="d h" style="left:89.0px;top:825.0px;">3.2</div>
<div class="d h" style="left:116.5px;top:843.5px;"><span class="c">电动汽车充换电服务</span></div>
<div class="d b" style="left:251.0px;top:843.5px;">EV charging service</div>
<div class="d r" style="left:116.5px;top:863.3px;"><span class="c">运营商提供电动汽车使用者的，包括通过身份识别认证、充换电、支付结算的整个过程。</span></div>
<div class="d h" style="left:89.0px;top:885.0px;">3.3</div>
<div class="d h" style="left:116.5px;top:903.8px;"><span class="c">电动汽车充换电服务运营商</span></div>
<div class="d b" style="left:291.0px;top:903.8px;">EV charging and battery swap service operator</div>
<div class="d r" style="left:116.5px;top:924.0px;"><span class="c">为电动汽车用户提供充换电服务的提供者，简称运营商。</span></div>
<div class="d h" style="left:89.0px;top:945.5px;">3.4</div>
<div class="d h" style="left:116.5px;top:963.8px;"><span class="c">电动汽车充换电服务平台</span></div>
<div class="d b" style="left:278.5px;top:963.8px;">EV charging and battery swap service platform</div>
<div class="d r" style="left:116.5px;top:983.8px;"><span class="c" style="letter-spacing:0.76px">对电动汽车信息及电动汽车基础设施信息进行采集、处理和运行管理，向用户提供充换电服务、</span></div>
<div class="d r" style="left:678.0px;top:1006.0px;">1</div>
</div></div>
<div class="a" style="left:379px;top:783px;width:1026px;height:2px;background:#f1f1f1"></div>
<!--/DOC-->
<!-- bottom -->
<div class="a" style="left:377px;top:786px;width:1029px;height:66px;background:#eeeeee"></div>
<div class="a" style="left:396px;top:829px;width:14px;height:14px;border-radius:50%;background:#2b74f6"></div>
<div class="a" style="left:401px;top:834px;width:4px;height:4px;border-radius:50%;background:#fff"></div>
<div class="a" style="left:417px;top:825px;font-size:14px;line-height:20px;color:#1f5fcf">全文</div>
<div class="a" style="left:478px;top:829px;width:14px;height:14px;border-radius:50%;background:#fff;border:1px solid #dcdfe6"></div>
<div class="a" style="left:500px;top:825px;font-size:14px;line-height:20px;color:#333">与上个版本的差异</div>
<div class="a" style="left:1322px;top:820px;width:64px;height:32px;border-radius:4px;background:#2b74fa;border:1px solid #1f5fd6;color:#fff;font-size:14px;line-height:30px;text-align:center;letter-spacing:4px;text-indent:4px">关闭</div>
</body></html>
